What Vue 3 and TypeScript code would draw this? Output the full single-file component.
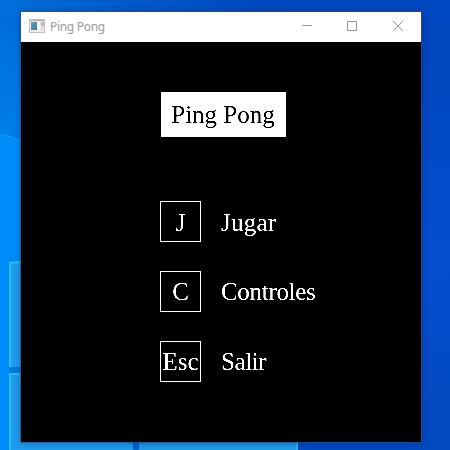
<script setup lang="ts">
interface MenuItem {
  key: string
  label: string
  fit: string
}

const title = 'Ping Pong'
const items: MenuItem[] = [
  { key: 'J', label: 'Jugar', fit: 'loose' },
  { key: 'C', label: 'Controles', fit: 'tight' },
  { key: 'Esc', label: 'Salir', fit: 'tighter' },
]
</script>

<template>
  <div class="desktop">
    <svg class="wallpaper" viewBox="0 0 450 450" aria-hidden="true">
      <defs>
        <linearGradient id="sky" x1="0" x2="1" y1="0" y2="0">
          <stop offset="0" stop-color="#0070dc" />
          <stop offset="0.25" stop-color="#005bcb" />
          <stop offset="0.6" stop-color="#0048bb" />
          <stop offset="1" stop-color="#0047c2" />
        </linearGradient>
        <linearGradient id="right" x1="0" x2="0" y1="0" y2="1">
          <stop offset="0" stop-color="#0046bc" />
          <stop offset="0.55" stop-color="#044dce" />
          <stop offset="1" stop-color="#0349bf" />
        </linearGradient>
        <linearGradient id="left" x1="0" x2="0" y1="0" y2="1">
          <stop offset="0" stop-color="#006cda" />
          <stop offset="1" stop-color="#007fe9" />
        </linearGradient>
      </defs>
      <rect width="450" height="450" fill="url(#sky)" />
      <rect x="400" y="20" width="50" height="430" fill="url(#right)" />
      <rect y="12" width="40" height="130" fill="url(#left)" />
      <path d="M0 134Q12 136 24 142V450H0Z" fill="#008cf9" />
      <path d="M0 134Q12 136 24 142" fill="none" stroke="#189bf5" />
      <path d="M9 263L40 260V367H9Z" fill="#229cef" />
      <path d="M9 373H133V450H9Z" fill="#209bed" />
      <path d="M10 367V263L30 261M10 450V374H30" fill="none" stroke="#25bdf5" stroke-width="2" />
      <rect x="9" y="367" width="20" height="6" fill="#0078df" />
      <rect x="133" y="430" width="6" height="20" fill="#0067d5" />
      <rect x="139" y="430" width="158" height="20" fill="#209be6" />
      <rect x="296" y="430" width="2" height="20" fill="#2bb4f0" />
      <rect x="298" y="430" width="110" height="20" fill="#0349bf" />
    </svg>

    <main class="window">
      <header class="titlebar">
        <svg class="app-icon" viewBox="0 0 16 14" aria-hidden="true">
          <defs>
            <linearGradient id="pane" x2="1" y2="1">
              <stop stop-color="#5c9cb5" />
              <stop offset="1" stop-color="#437a9e" />
            </linearGradient>
          </defs>
          <rect x="0.5" y="0.5" width="15" height="13" fill="#eeeaea" stroke="#c8bcbc" />
          <path d="M1 1.5H15" stroke="#b5acac" />
          <rect x="2" y="3" width="6" height="8" fill="url(#pane)" />
          <rect x="8" y="3" width="3" height="8" fill="#f7f7f7" />
          <rect x="12" y="3" width="3" height="4" fill="#c0b9b9" />
          <rect x="12" y="7" width="2" height="4" fill="#e2dddd" />
        </svg>
        <span class="caption">{{ title }}</span>
        <div class="window-buttons">
          <svg viewBox="0 0 10 10"><path d="M0 4.5H10" /></svg>
          <svg viewBox="0 0 10 10"><path d="M.5 .5H9.5V9.5H.5Z" /></svg>
          <svg viewBox="0 0 10 10"><path d="M0 0L10 10M10 0L0 10" /></svg>
        </div>
      </header>
      <section class="game">
        <h1 class="title"><span>{{ title }}</span></h1>
        <ul class="menu">
          <li v-for="item in items" :key="item.key">
            <kbd><span>{{ item.key }}</span></kbd>
            <span class="label" :class="item.fit">{{ item.label }}</span>
          </li>
        </ul>
      </section>
    </main>
  </div>
</template>

<style>
body {
  margin: 0;
  overflow: hidden;
}
</style>

<style scoped>
.desktop {
  position: relative;
  box-sizing: border-box;
  width: 450px;
  height: 450px;
  padding: 12px 29px 8px 21px;
  overflow: hidden;
}
.wallpaper {
  position: absolute;
  inset: 0;
  width: 450px;
  height: 450px;
}
.window {
  position: relative;
  width: 400px;
  height: 430px;
  box-shadow: 0 0 0 1px rgba(55, 80, 115, 0.65), 0 1px 7px rgba(0, 20, 70, 0.4);
}
.titlebar {
  display: flex;
  align-items: center;
  box-sizing: border-box;
  height: 30px;
  padding: 0 18px 0 8px;
  background: #fff;
}
.app-icon {
  width: 16px;
  height: 14px;
  margin-top: -3px;
}
.caption {
  margin-left: 5px;
  font: 12px/16px "Noto Sans", sans-serif;
  letter-spacing: -0.3px;
  color: #999;
}
.window-buttons {
  display: flex;
  gap: 35px;
  margin: -2px 0 0 auto;
}
.window-buttons svg {
  display: block;
  width: 10px;
  height: 10px;
  overflow: visible;
  fill: none;
  stroke: #949498;
  stroke-width: 1;
}
.window-buttons svg:nth-child(-n + 2) {
  margin-left: -1px;
  margin-right: 1px;
}
.game {
  display: flex;
  flex-direction: column;
  box-sizing: border-box;
  height: 400px;
  padding: 50px 0 0 139px;
  background: #000;
  color: #fff;
  font: 25px/28px "Liberation Serif", serif;
  filter: contrast(3);
}
.title {
  display: flex;
  align-items: center;
  justify-content: center;
  width: 125px;
  height: 45px;
  margin: 0 0 64px 1px;
  background: #fff;
  color: #000;
  font: inherit;
}
.title span {
  margin-right: 1px;
}
.menu {
  display: flex;
  flex-direction: column;
  gap: 29px;
  margin: 0;
  padding: 0;
  list-style: none;
}
.menu li {
  display: flex;
  align-items: center;
  gap: 20px;
  height: 41px;
}
.menu li:first-child span {
  padding-top: 2px;
}
kbd {
  display: flex;
  align-items: center;
  justify-content: center;
  box-sizing: border-box;
  width: 41px;
  height: 41px;
  border: 1px solid #fff;
  font: inherit;
}
.loose {
  letter-spacing: 0.25px;
}
.tight {
  letter-spacing: -0.3px;
}
.tighter {
  letter-spacing: -0.4px;
}
</style>
